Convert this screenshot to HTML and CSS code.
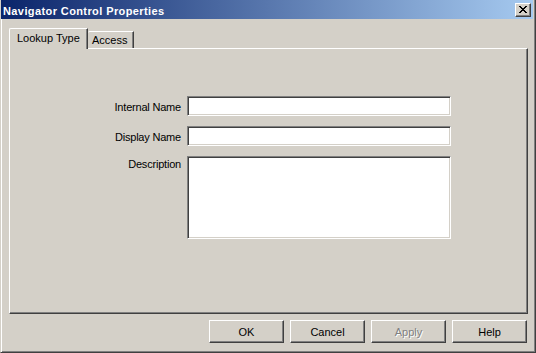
FILE: index.html
```html
<!DOCTYPE html>
<html lang="en">
<head>
    <meta charset="UTF-8">
    <title>Navigator Control Properties</title>
    <link rel="stylesheet" href="styles.css">
</head>
<body>

    <div class="window">
        <div class="titlebar">
            <span class="title">Navigator Control Properties</span>
            <button class="close-btn" aria-label="Close">
                <svg width="8" height="7" viewBox="0 0 8 7" shape-rendering="crispEdges">
                    <path d="M0 0h2v1h1v1h2v-1h1v-1h2v1h-1v1h-1v1h-1v1h1v1h1v1h1v1h-2v-1h-1v-1h-2v1h-1v1h-2v-1h1v-1h1v-1h1v-1h-1v-1h-1v-1h-1z" fill="#000"/>
                </svg>
            </button>
        </div>

        <div class="tabs">
            <div class="tab active">Lookup Type</div>
            <div class="tab tab-access">Access</div>
        </div>

        <div class="tab-panel">
            <div class="form">
                <label class="field-label" for="internal-name">Internal Name</label>
                <input class="field" id="internal-name" type="text">

                <label class="field-label" for="display-name">Display Name</label>
                <input class="field" id="display-name" type="text">

                <label class="field-label desc-label" for="description">Description</label>
                <textarea class="field field-area" id="description"></textarea>
            </div>
        </div>

        <div class="buttons">
            <button class="btn">OK</button>
            <button class="btn">Cancel</button>
            <button class="btn disabled">Apply</button>
            <button class="btn">Help</button>
        </div>
    </div>

</body>
</html>
```

FILE: styles.css
```css
body {
    margin: 0;
    padding: 0;
    font-family: 'Liberation Sans', Arial, sans-serif;
    font-size: 11px;
    line-height: 13px;
    color: #000;
}

/* buitenkant van het venster, klassieke 3D rand */
.window {
    width: 536px;
    height: 353px;
    box-sizing: border-box;
    background: #d4d0c8;
    border-left: 1px solid #d4d0c8;
    border-right: 1px solid #404040;
    border-bottom: 1px solid #404040;
    padding-right: 2px;
    box-shadow: inset 1px 0 #fff, inset -1px -1px #808080;
}

.titlebar {
    display: flex;
    align-items: flex-start;
    height: 19px;
    padding-left: 2px;
    padding-right: 2px;
    box-sizing: border-box;
    background: linear-gradient(to right, #0a246a, #a6caf0);
}

.title {
    flex: 1;
    padding-top: 5px;
    color: #fff;
    font-weight: bold;
    letter-spacing: 0.4px;
}

.close-btn {
    width: 16px;
    height: 14px;
    margin-top: 3px;
    padding: 0 0 1px 0;
    box-sizing: border-box;
    display: flex;
    align-items: center;
    justify-content: center;
    background: #d4d0c8;
    border: 1px solid;
    border-color: #fff #404040 #404040 #fff;
    box-shadow: inset -1px -1px #808080;
}

/* tabbladen */
.tabs {
    display: flex;
    align-items: flex-end;
    height: 21px;
    margin: 9px 0 0 8px;
    position: relative;
    z-index: 1;
}

.tab {
    box-sizing: border-box;
    background: #d4d0c8;
    border-top: 1px solid #fff;
    border-left: 1px solid #fff;
    border-right: 1px solid #404040;
    box-shadow: inset -1px 0 #808080;
    border-top-left-radius: 2px;
}

.tab.active {
    width: 79px;
    height: 21px;
    padding: 3px 0 0 7px;
}

.tab-access {
    width: 46px;
    height: 17px;
    margin-bottom: 1px;
    padding: 2px 0 0 4px;
    border-left: none;
}

.tab-panel {
    width: 519px;
    height: 266px;
    margin: -1px 0 0 8px;
    box-sizing: border-box;
    border: 1px solid;
    border-color: #fff #404040 #404040 #fff;
    box-shadow: inset -1px -1px #808080;
    padding: 47px 0 0 6px;
}

.form {
    display: grid;
    grid-template-columns: 165px 264px;
    column-gap: 6px;
    row-gap: 10px;
}

.field-label {
    text-align: right;
    padding-top: 5px;
    letter-spacing: -0.2px;
}

.desc-label {
    padding-top: 2px;
}

.field {
    display: block;
    width: 264px;
    height: 20px;
    margin: 0;
    box-sizing: border-box;
    background: #fff;
    border: 1px solid;
    border-color: #808080 #fff #fff #808080;
    box-shadow: inset 1px 1px #404040, inset -1px -1px #d4d0c8;
    font: inherit;
    padding: 2px 3px;
    outline: none;
}

.field-area {
    height: 83px;
    resize: none;
}

/* knoppen onderaan */
.buttons {
    display: flex;
    justify-content: flex-end;
    gap: 6px;
    width: 519px;
    margin: 6px 0 0 8px;
    padding-right: 1px;
    box-sizing: border-box;
}

.btn {
    width: 75px;
    height: 23px;
    box-sizing: border-box;
    padding: 2px 0 0 0;
    background: #d4d0c8;
    border: 1px solid;
    border-color: #fff #404040 #404040 #fff;
    box-shadow: inset -1px -1px #808080;
    font: inherit;
    line-height: 13px;
    color: #000;
    text-align: center;
    vertical-align: top;
}

.btn.disabled {
    color: #808080;
    text-shadow: 1px 1px #fff;
}
```
